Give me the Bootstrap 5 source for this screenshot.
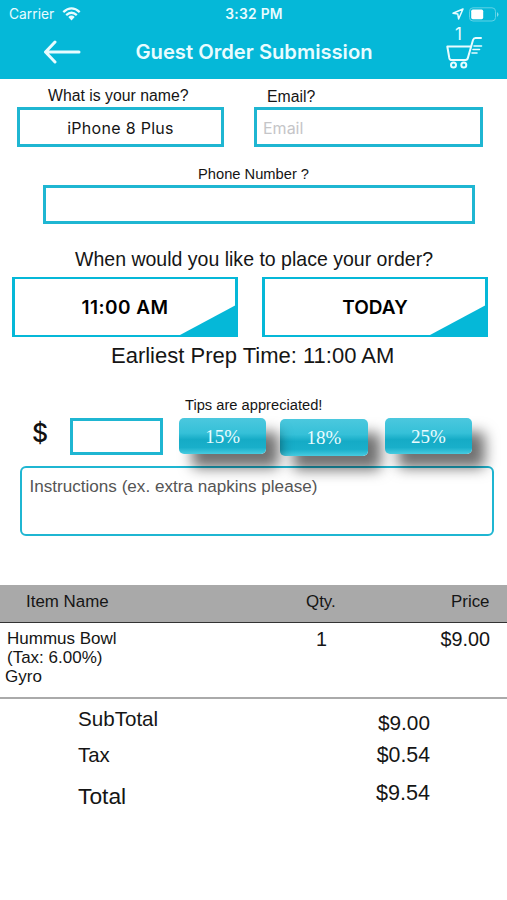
<!DOCTYPE html>
<html lang="en">
<head>
<meta charset="utf-8">
<meta name="viewport" content="width=device-width, initial-scale=1">
<title>Guest Order Submission</title>
<link href="https://cdn.jsdelivr.net/npm/bootstrap@5.3.0/dist/css/bootstrap.min.css" rel="stylesheet">
<style>
:root{--aqua:#05b8d8;--line:#1fb6d2}
body{font-family:"Liberation Sans",Arial,sans-serif;color:#151515;background:#fff;line-height:20px;white-space:nowrap;overflow-x:hidden}
.ui{font-family:Inter,sans-serif}
.app-head{background:var(--aqua);height:79px;color:#e9fcff}
.status{height:28px;font-size:13.8px;padding:0 8px 0 9px}
.status>div{flex:1 1 0}
.clock{letter-spacing:.3px}
.title-row{height:51px;padding:0 23px 0 43px}
.app-title{font-size:20.2px;font-weight:600;line-height:24px;margin:0 0 3px -18px}
.back{margin-bottom:3px}
.cart-count{font-size:17px;line-height:15px;top:-6px;left:10px}
.box,.box:focus{border:3px solid var(--line);border-radius:0;height:39.5px;color:#151515;background:transparent;box-shadow:none;padding:2px 6px 0}
.box::placeholder{color:#c5c5c8;opacity:1}
.fields{padding-left:17px;gap:30px}
.f-name{width:207px}.f-mail{width:229px}
.lbl{height:28px;padding-top:7px;font-size:15.8px}
.f-name .lbl{padding-left:31px}
.f-mail .lbl{padding:8px 0 0 13px}
.name-in{letter-spacing:.3px}
.phone{margin:17px 32px 0 43px}
.phone .lbl{height:21px;padding:0 0 0 155px;font-size:14.7px}
.when{margin-top:25px;font-size:19.53px;padding-left:75px}
.slots{padding:8px 19px 0 12px;gap:24px}
.slot{flex:1 1 0;height:60px;border:solid var(--aqua);border-width:2px 3px;border-radius:0;font-size:19px;font-weight:600;color:#000;position:relative;padding:2px 0 0}
.slot.time{letter-spacing:.45px}
.slot svg{position:absolute;right:-1px;bottom:0}
.prep{font-size:22px;padding:8px 0 0 111px;line-height:22px}
.tips-lbl{font-size:14.7px;padding-left:185px;margin-top:28px}
.tips{padding:2.5px 35px 0 32px;height:39px}
.dollar{font-size:25px;font-weight:500;width:38px;line-height:31px;color:#111}
.tip-in{width:93px;height:37px;margin-right:16px}
.tip{width:87.5px;height:36.5px;border:0;border-radius:5px;padding:0;color:#eafcff!important;font:19px/37px "Liberation Serif",serif;background:linear-gradient(#4bc8de 0,#35c0d8 42%,#15abc6 60%,#19afca 82%,#48cbe0 100%)!important;box-shadow:13px 14px 14px rgba(0,0,0,.56)!important;position:relative}
.tip-mid{margin:1.5px 17px 0 14px}
.notes{margin:12px 13px 0 19.5px;height:70px;border:2.5px solid var(--line);border-radius:6px;font-size:17.1px;color:#555;padding:9px 8px}
.items-head{margin-top:49px;height:37.5px;background:#a9a9a9;border-bottom:1.5px solid #333;font-size:16.9px;padding:7px 17.5px 0 26px}
.head-name{width:280px}
.item{height:76px;border-bottom:2px solid #aaa;font-size:17px;padding:6px 17px 0 7px;line-height:19.4px}
.item-name{width:309px}
.item .big{font-size:19.8px;line-height:20px}
.gyro{margin-left:-2px}
.sum{padding:0 77px 0 78px}
.s1{padding-top:10px;font-size:20.6px}
.s1 .amt{padding-top:4px;font-size:20.8px}
.s2{padding-top:12.5px;font-size:20.4px}
.s2 .amt{font-size:21.3px}
.s3{padding-top:20.5px;font-size:22.8px}
.s3 .amt{margin-top:-3px;font-size:21.6px}
</style>
<script src="https://cdn.jsdelivr.net/npm/bootstrap@5.3.0/dist/js/bootstrap.bundle.min.js"></script>
</head>
<body>
<header class="app-head ui">
  <div class="status d-flex align-items-center">
    <div class="d-flex align-items-center">Carrier
      <svg class="ms-2" width="19" height="14" viewBox="0 0 18 14" fill="none" stroke="#e9fcff" stroke-width="2.3"><path d="M.8 5.1Q9-2.400 17.2 5.1M3.7 8.1Q9 3.3 14.3 8.1"/><path d="M5.8 10Q9 7.2 12.2 10L9 13.6Z" fill="#e9fcff" stroke="none"/></svg>
    </div>
    <span class="fw-semibold clock">3:32 PM</span>
    <div class="d-flex align-items-center justify-content-end">
      <svg width="12" height="12" viewBox="0 0 12 12" fill="none" stroke="#e9fcff" stroke-width="1.5" stroke-linejoin="round"><path d="M11 1 1 5.2 5.8 6.1 6.6 11Z"/></svg>
      <svg class="ms-1" width="31" height="15" viewBox="0 0 31 15"><rect x="1.5" y=".8" width="26" height="13.2" rx="3.5" fill="none" stroke="#5fd2e6"/><rect x="3.2" y="2.6" width="12" height="9.6" rx="1.6" fill="#fff"/><path d="M29 5v5q3-2.500 0-5" fill="#7fdcec"/></svg>
    </div>
  </div>
  <div class="title-row d-flex align-items-center justify-content-between">
    <svg class="back" width="38" height="24" viewBox="0 0 38 24" fill="none" stroke="#e9fcff" stroke-width="3" stroke-linecap="round" stroke-linejoin="round"><path d="M36 12H2.500M12 2 2.500 12 12 22"/></svg>
    <h1 class="app-title">Guest Order Submission</h1>
    <div class="position-relative">
      <svg class="d-block" width="39" height="42" viewBox="0 0 39 42" fill="none" stroke="#e9fcff" stroke-width="2" stroke-linecap="round" stroke-linejoin="round"><path d="M36 5H30.500Q28.700 5 28 7L23 24.500Q22.500 27 20.500 27H6.500Q4.700 27 4.300 25L2.300 13.500H25.500"/><path d="M29 13H36.500M28 16.500H34.500M27 20H32" stroke-width="1.6"/><circle cx="8.500" cy="32" r="2.500"/><circle cx="18.800" cy="32" r="2.500"/></svg>
      <span class="cart-count position-absolute">1</span>
    </div>
  </div>
</header>

<main>
  <div class="fields d-flex">
    <div class="f-name"><label class="lbl d-block" for="nm">What is your name?</label>
      <input id="nm" class="form-control box ui text-center name-in" value="iPhone 8 Plus"></div>
    <div class="f-mail"><label class="lbl d-block" for="em">Email?</label>
      <input id="em" class="form-control box ui" placeholder="Email"></div>
  </div>
  <div class="phone"><label class="lbl d-block" for="ph">Phone Number ?</label><input id="ph" class="form-control box"></div>

  <div class="when">When would you like to place your order?</div>
  <div class="slots d-flex">
    <button class="btn slot time ui">11:00 AM<svg width="56" height="30" viewBox="0 0 56 30"><path d="M0 30 56 0V30Z" fill="#05b8d8"/></svg></button>
    <button class="btn slot ui">TODAY<svg width="56" height="30" viewBox="0 0 56 30"><path d="M0 30 56 0V30Z" fill="#05b8d8"/></svg></button>
  </div>
  <div class="prep">Earliest Prep Time: 11:00 AM</div>

  <div class="tips-lbl">Tips are appreciated!</div>
  <div class="tips d-flex align-items-start">
    <span class="dollar ui">$</span><input class="form-control box tip-in flex-shrink-0" aria-label="Tip">
    <button class="btn tip z-2">15%</button>
    <button class="btn tip z-1 tip-mid">18%</button>
    <button class="btn tip z-1">25%</button>
  </div>
  <div class="notes">Instructions (ex. extra napkins please)</div>

  <div class="items-head d-flex"><div class="head-name">Item Name</div><div>Qty.</div><div class="ms-auto">Price</div></div>
  <div class="item d-flex">
    <div class="item-name"><div>Hummus Bowl</div><div>(Tax: 6.00%)</div><div class="gyro">Gyro</div></div>
    <div class="big">1</div><div class="big ms-auto">$9.00</div>
  </div>
  <div class="sum s1 d-flex justify-content-between"><span>SubTotal</span><span class="amt">$9.00</span></div>
  <div class="sum s2 d-flex justify-content-between"><span>Tax</span><span class="amt">$0.54</span></div>
  <div class="sum s3 d-flex justify-content-between"><span>Total</span><span class="amt">$9.54</span></div>
</main>
</body>
</html>
